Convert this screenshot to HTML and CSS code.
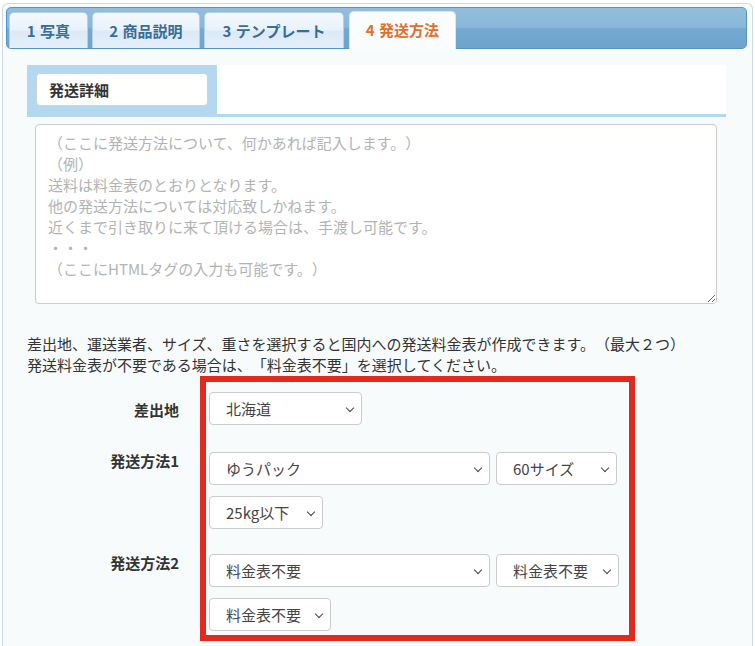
FILE: index.html
```html
<!DOCTYPE html>
<html lang="ja">
<head>
<meta charset="utf-8">
<title>発送方法</title>
<link rel="stylesheet" href="styles.css">
</head>
<body>
<div class="frame">
  <div class="tabbar">
    <div class="tab t1">1 写真</div>
    <div class="tab t2">2 商品説明</div>
    <div class="tab t3">3 テンプレート</div>
    <div class="tab t4 active">4 発送方法</div>
  </div>
  <div class="content">
    <div class="section-head">
      <div class="head-box"><div class="head-title">発送詳細</div></div>
    </div>
    <textarea class="memo" placeholder="（ここに発送方法について、何かあれば記入します。）&#10;（例）&#10;送料は料金表のとおりとなります。&#10;他の発送方法については対応致しかねます。&#10;近くまで引き取りに来て頂ける場合は、手渡し可能です。&#10;・・・&#10;（ここにHTMLタグの入力も可能です。）"></textarea>
    <p class="note">差出地、運送業者、サイズ、重さを選択すると国内への発送料金表が作成できます。（最大２つ）<br>発送料金表が不要である場合は、「料金表不要」を選択してください。</p>
    <div class="form">
      <div class="label label-1">差出地</div>
      <div class="fields row-1">
        <span class="sel w-pref"><select><option>北海道</option></select></span>
      </div>
      <div class="label label-2">発送方法1</div>
      <div class="fields row-2">
        <span class="sel w-carrier"><select><option>ゆうパック</option></select></span>
        <span class="sel w-size"><select><option>60サイズ</option></select></span>
        <span class="sel w-weight"><select><option>25kg以下</option></select></span>
      </div>
      <div class="label label-3">発送方法2</div>
      <div class="fields row-3">
        <span class="sel w-carrier"><select><option>料金表不要</option></select></span>
        <span class="sel w-size2"><select><option>料金表不要</option></select></span>
        <span class="sel w-none"><select><option>料金表不要</option></select></span>
      </div>
      <div class="highlight"></div>
    </div>
  </div>
</div>
</body>
</html>
```
FILE: styles.css
```css
* { box-sizing: border-box; }
html, body { margin: 0; padding: 0; background: #fff; }
body {
  font-family: "Noto Sans CJK JP", "Noto Sans", sans-serif;
  color: #333;
  overflow: hidden;
  height: 646px;
  text-spacing-trim: space-all;
}
.frame {
  margin: 3px 2px 0 2px;
  border: 1px solid #cadcea;
  border-bottom: none;
  border-radius: 6px 6px 0 0;
  background: #f8fbfc;
  padding: 3px 5px 0 3px;
  height: 643px;
  overflow: hidden;
}
.tabbar {
  height: 42px;
  border: 1px solid #5494c9;
  border-radius: 5px;
  background: linear-gradient(to bottom, #93bedd 0%, #8ab8da 48%, #75a9d0 52%, #6ea4cd 100%);
  display: flex;
  align-items: flex-end;
  gap: 4px;
  padding: 0 0 0 2px;
}
.tab {
  height: 36px;
  padding: 0;
  text-align: center;
  border: 1px solid #b4d0ea;
  border-bottom: none;
  border-radius: 5px 5px 0 0;
  background: linear-gradient(to bottom, #f4f9fd 0%, #e9f2fb 48%, #dce9f6 52%, #e4eff9 100%);
  color: #386c99;
  font-weight: bold;
  font-size: 15px;
  line-height: 35px;
  white-space: nowrap;
  word-spacing: 1px;
}
.t1 { width: 79px; }
.t2 { width: 108px; }
.t3 { width: 140px; }
.t4 { width: 107px; }
.tab.active {
  height: 38px;
  margin-bottom: -1px;
  margin-left: 1px;
  border-color: #d6e6f3;
  background: #fafcfd;
  color: #e0702a;
  line-height: 36px;
}
.content {
  padding: 16px 21px 0 21px;
}
.section-head {
  display: flex;
  background: #fff;
  border-bottom: 3px solid #b5d8f1;
}
.head-box {
  background: #b5d8f1;
  padding: 8px 9px;
}
.head-title {
  width: 172px;
  height: 33px;
  border: 1px solid #d2d2d2;
  border-radius: 4px;
  background: #fff;
  padding-left: 12px;
  font-size: 15px;
  font-weight: bold;
  line-height: 31px;
  color: #333;
}
.memo {
  display: block;
  margin: 7px 0 0 8px;
  width: 682px;
  height: 180px;
  border: 1px solid #cccccc;
  border-radius: 4px;
  background: #fff;
  padding: 7px 12px;
  font-family: "Noto Sans CJK JP", "Noto Sans", sans-serif;
  font-size: 15px;
  line-height: 21px;
  color: #333;
  resize: vertical;
  text-spacing-trim: space-all;
}
.memo::placeholder { color: #b3b3b3; }
.note {
  margin: 29px 0 0 0;
  font-size: 15px;
  line-height: 21px;
  color: #333;
  white-space: nowrap;
}
.form {
  position: relative;
  display: grid;
  grid-template-columns: 152px 420px;
  column-gap: 30px;
  padding-top: 17px;
}
.label {
  text-align: right;
  font-weight: bold;
  font-size: 15px;
  line-height: 22px;
  color: #333;
}
.label-1 { margin-top: 7px; }
.label-2 { margin-top: -2px; }
.label-3 { margin-top: -2px; }
.fields {
  display: flex;
  flex-wrap: wrap;
  gap: 11px 6px;
  width: 415px;
}
.row-1 { margin-bottom: 27px; }
.row-2 { margin-bottom: 25px; }
.sel {
  position: relative;
  display: block;
  height: 33px;
}
.sel select {
  appearance: none;
  -webkit-appearance: none;
  width: 100%;
  height: 33px;
  border: 1px solid #cbcbcb;
  border-radius: 4px;
  background: #fff;
  padding: 0 0 0 16px;
  font-family: "Noto Sans CJK JP", "Noto Sans", sans-serif;
  font-size: 15px;
  color: #444;
  outline: none;
}
.sel::after {
  content: "";
  position: absolute;
  right: 9px;
  top: 13px;
  width: 5px;
  height: 5px;
  border-right: 1.6px solid #444;
  border-bottom: 1.6px solid #444;
  transform: rotate(45deg);
  pointer-events: none;
}
.w-pref { width: 153px; }
.w-carrier { width: 281px; }
.w-size { width: 121px; }
.w-size2 { width: 123px; }
.w-weight { width: 114px; }
.w-none { width: 122px; }
.highlight {
  position: absolute;
  left: 173px;
  top: 1px;
  width: 435px;
  height: 265px;
  border: 6px solid #e12a1d;
  pointer-events: none;
}
```
